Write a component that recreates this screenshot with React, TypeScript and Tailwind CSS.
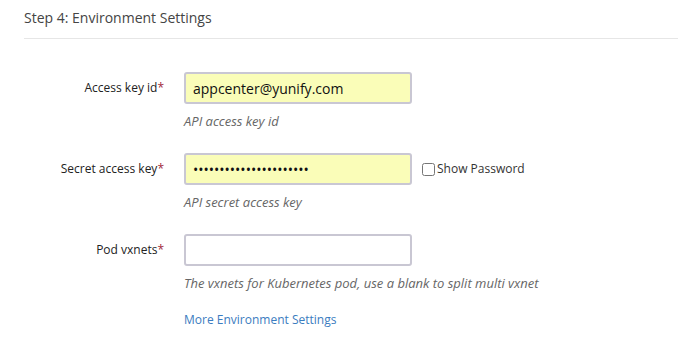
import React from "react"

const fields = [
  { label: "Access key id", value: "appcenter@yunify.com", type: "text", help: "API access key id", filled: true },
  { label: "Secret access key", value: "qingcloudsecretkey1234", type: "password", help: "API secret access key", filled: true, toggle: true },
  { label: "Pod vxnets", value: "", type: "text", help: "The vxnets for Kubernetes pod, use a blank to split multi vxnet", filled: false },
]

export default function App() {
  return (
    <div className="w-[678px] h-[352px] bg-white pl-6 font-['Open_Sans',sans-serif] text-[#333]">
      {/* Section header */}
      <div className="pt-[7px] pb-[9px] border-b border-[#e6e6e6] text-[14px] leading-[22px] text-[#444]">
        Step 4: Environment Settings
      </div>

      <div className="mt-[33px] flex flex-col gap-[23px]">
        {fields.map((f) => (
          <div key={f.label}>
            <div className="flex items-center">
              <label className="w-[160px] pr-5 text-right text-[12px] leading-5 text-[#222]">
                {f.label}
                <span className="text-[#a2273a]">*</span>
              </label>
              <input
                type={f.type}
                defaultValue={f.value}
                readOnly
                className={`w-[228px] h-8 px-[7px] border-2 border-[#c9c7d3] rounded-[3px] text-[14px] text-[#111] outline-none ${f.filled ? "bg-[#fafdb8]" : "bg-white"}`}
              />
              {f.toggle && (
                <label className="ml-[10px] flex items-center gap-[2px] text-[12px] text-[#333]">
                  <input type="checkbox" className="w-[13px] h-[13px] m-0" />
                  Show Password
                </label>
              )}
            </div>
            <div className="ml-[160px] mt-2 text-[13px] leading-[18px] italic text-[#666]">{f.help}</div>
          </div>
        ))}
      </div>

      <div className="ml-[160px] mt-[18px] text-[12px] leading-5 text-[#3b7cc0]">
        <a href="#">More Environment Settings</a>
      </div>
    </div>
  )
}
